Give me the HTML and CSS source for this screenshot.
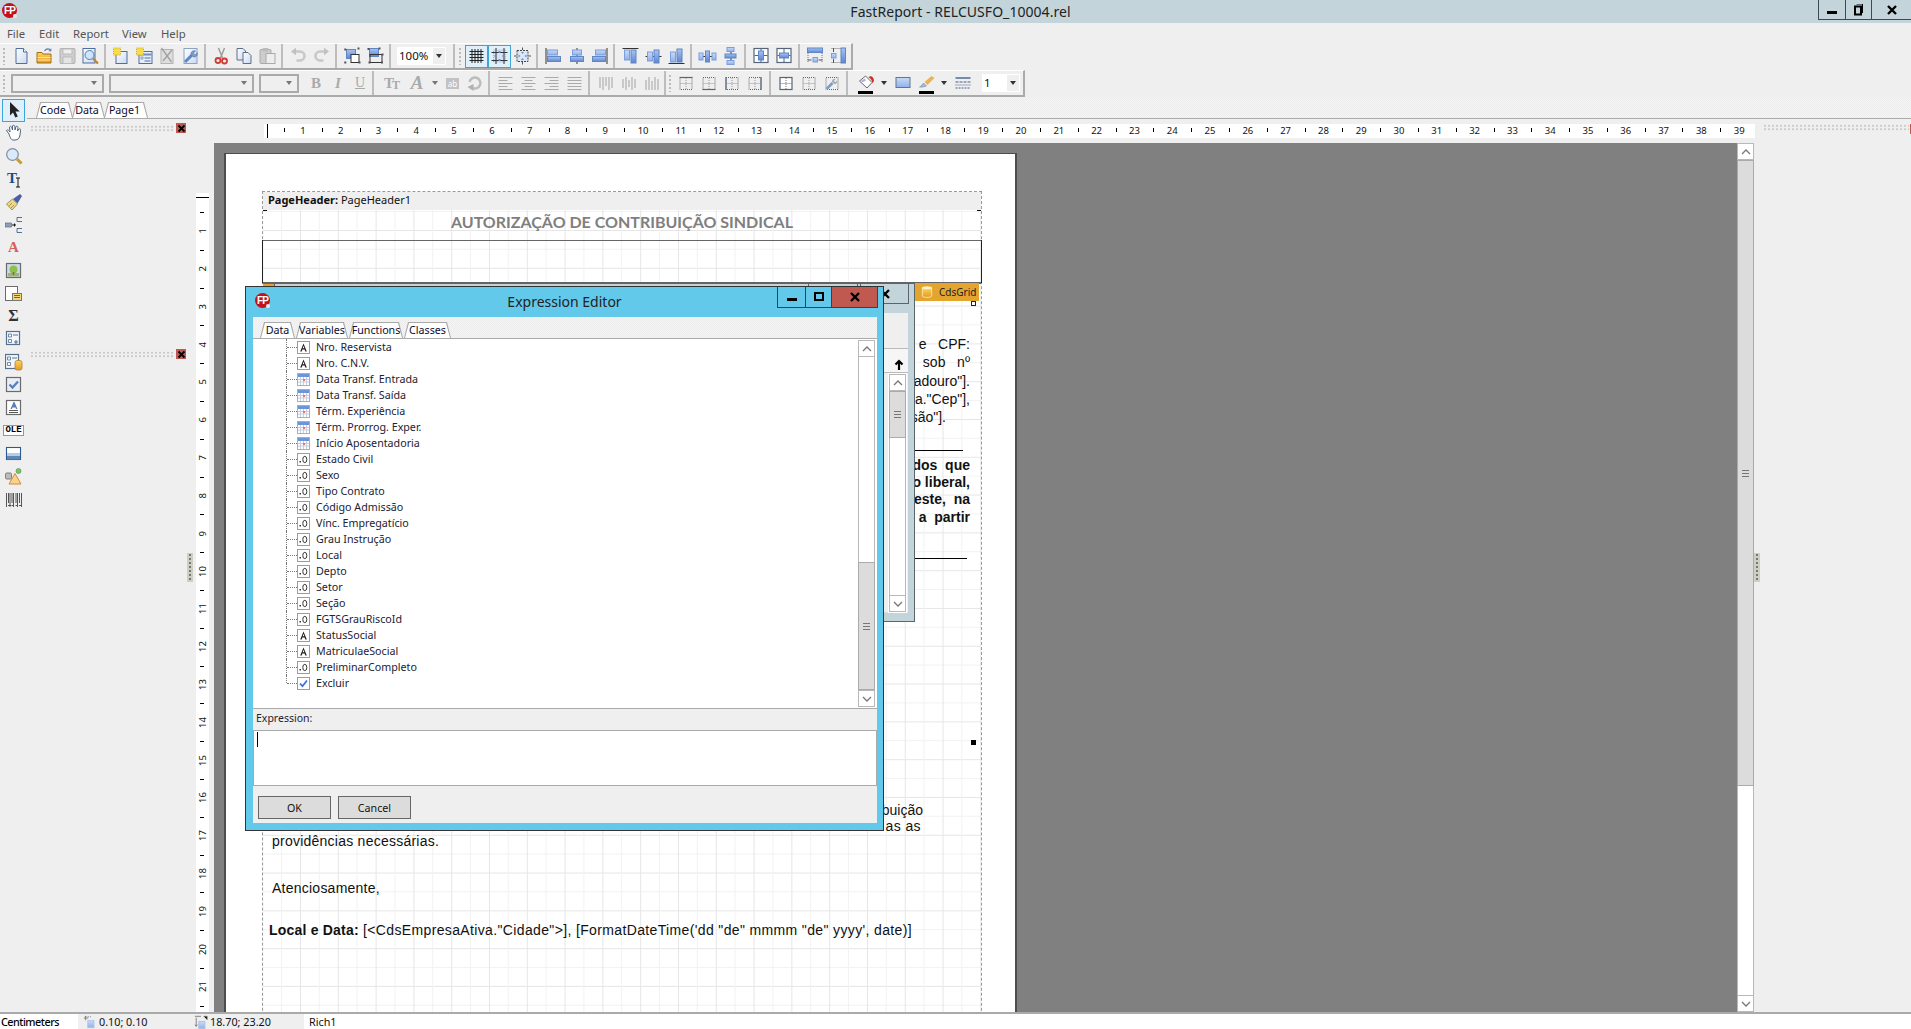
FILE: index.html
```html
<!DOCTYPE html>
<html lang="pt">
<head>
<meta charset="utf-8">
<title>FastReport - RELCUSFO_10004.rel</title>
<link rel="stylesheet" href="styles.css">
</head>
<body>
<svg class="defs" width="0" height="0" aria-hidden="true">
<defs>
<linearGradient id="bl" x1="0" y1="0" x2="0" y2="1"><stop offset="0" stop-color="#c9dcf7"/><stop offset="1" stop-color="#8fb0ea"/></linearGradient>
<linearGradient id="bd" x1="0" y1="0" x2="0" y2="1"><stop offset="0" stop-color="#a9c4f2"/><stop offset="1" stop-color="#5f86d2"/></linearGradient>
<linearGradient id="pg" x1="0" y1="0" x2="1" y2="1"><stop offset="0" stop-color="#fff"/><stop offset="1" stop-color="#c9d9f2"/></linearGradient>
<linearGradient id="or" x1="0" y1="0" x2="0" y2="1"><stop offset="0" stop-color="#fbd45f"/><stop offset="1" stop-color="#e69a22"/></linearGradient>

<symbol id="new" viewBox="0 0 18 18"><path d="M3.5 1.5h7.5l3.5 3.5v11.500H3.500z" fill="url(#pg)" stroke="#4f6f9f"/><path d="M11 1.500V5h3.500" fill="#fff" stroke="#4f6f9f"/></symbol>
<symbol id="open" viewBox="0 0 18 18"><path d="M1.500 5.500h5l1 1.500h8v9h-14z" fill="url(#or)" stroke="#a56c18"/><path d="M2 10.500h13M2 13h13" stroke="#fbe6a4"/><path d="M9 4c1.500-2 3.500-2.500 5.500-1.500" fill="none" stroke="#5a7ba8" stroke-width="1.200"/><path d="M15.800 1.200v3h-3z" fill="#5a7ba8"/></symbol>
<symbol id="save" viewBox="0 0 18 18"><rect x="1.500" y="1.500" width="15" height="15" rx="1" fill="#cfcfcf" stroke="#b0b0b0"/><rect x="4.500" y="2" width="9" height="5" fill="#eee" stroke="#bbb"/><rect x="4.500" y="10" width="9" height="6.500" fill="#e4e4e4" stroke="#bbb"/></symbol>
<symbol id="prev" viewBox="0 0 18 18"><rect x="1.500" y="1.500" width="12" height="14.500" fill="url(#pg)" stroke="#4f6f9f"/><circle cx="8" cy="8" r="4.500" fill="#cfe5fb" stroke="#5a7ba8"/><path d="M11.500 11.500l5 5" stroke="#c27f32" stroke-width="2.200"/></symbol>
<symbol id="npage" viewBox="0 0 18 18"><rect x="3.500" y="4.500" width="11" height="12" fill="url(#pg)" stroke="#4f6f9f"/><rect x="1" y="1" width="7" height="7" fill="#f7dc4a" stroke="#c9a93a" stroke-dasharray="1 1"/></symbol>
<symbol id="ndlg" viewBox="0 0 18 18"><rect x="3.500" y="4.500" width="13" height="12" fill="#e8effa" stroke="#4f6f9f"/><path d="M4 7.500h12" stroke="#6f8fc0" stroke-width="2"/><rect x="5.500" y="10" width="2" height="2" fill="#fff" stroke="#4f6f9f" stroke-width=".6"/><path d="M9 11h6M9 14h6" stroke="#4f6f9f"/><rect x="1" y="1" width="7" height="7" fill="#f7dc4a" stroke="#c9a93a" stroke-dasharray="1 1"/></symbol>
<symbol id="dpage" viewBox="0 0 18 18"><rect x="2.500" y="2.500" width="12" height="14" fill="#dedede" stroke="#b4b4b4"/><path d="M3 1l10 14M13.500 3l-9 11" stroke="#a0a0a0" stroke-width="1.300"/></symbol>
<symbol id="pset" viewBox="0 0 18 18"><rect x="2.500" y="1.500" width="13" height="15" fill="url(#pg)" stroke="#8ca2c4"/><path d="M3.500 15l7-7" stroke="#5f86c6" stroke-width="3"/><path d="M9.500 7.500c-.5-2.500 2-4.500 4.500-3.500l-2.200 2.200 1.700 1.700 2.200-2.200c.8 2.500-1.200 4.800-3.700 4.300z" fill="#7f9cc9" stroke="#4f6f9f" stroke-width=".6"/></symbol>
<symbol id="cut" viewBox="0 0 18 18"><path d="M12 1L8 11M6 1l4 10" stroke="#9a9a9a" stroke-width="1.400"/><circle cx="5.500" cy="13.500" r="2.500" fill="none" stroke="#cf3c36" stroke-width="1.800"/><circle cx="12" cy="14" r="2.500" fill="none" stroke="#cf3c36" stroke-width="1.800"/></symbol>
<symbol id="copy" viewBox="0 0 18 18"><path d="M1.500 1.500h6l2.500 2.500v9h-8.500z" fill="url(#pg)" stroke="#5f6f88"/><path d="M7.500 5.500h5l3 3v8h-8z" fill="url(#pg)" stroke="#5f6f88"/></symbol>
<symbol id="paste" viewBox="0 0 18 18"><rect x="1.500" y="2.500" width="11" height="14" rx="1" fill="#cdcdcd" stroke="#aaa"/><rect x="4" y="1" width="6" height="3.500" rx="1" fill="#bbb"/><rect x="7.500" y="6.500" width="9" height="10" fill="#ededed" stroke="#aaa"/></symbol>
<symbol id="undo" viewBox="0 0 18 18"><path d="M5 4.500h5.500a4.500 4.500 0 0 1 0 9H7" fill="none" stroke="#c8c8c8" stroke-width="2.600"/><path d="M6.500 .8v7.400L1.500 4.500z" fill="#c0c0c0"/></symbol>
<symbol id="redo" viewBox="0 0 18 18"><path d="M13 4.500H7.500a4.500 4.500 0 0 0 0 9H11" fill="none" stroke="#c8c8c8" stroke-width="2.600"/><path d="M11.500 .8v7.400l5-3.700z" fill="#c0c0c0"/></symbol>
<symbol id="grp" viewBox="0 0 18 18"><rect x="3" y="2.500" width="9" height="9" fill="url(#bd)" stroke="#5f86c6"/><rect x="7.500" y="7.500" width="8" height="8" fill="#fff" stroke="#333"/><path d="M.8 1.500h2v2h-2zM14 .5h2v2h-2zM.8 14.500h2v2h-2zM15 14.500h2v2h-2z" fill="#555"/></symbol>
<symbol id="ugrp" viewBox="0 0 18 18"><rect x="3" y="1.500" width="9" height="8" fill="url(#bd)" stroke="#5f86c6"/><rect x="3.500" y="7.500" width="12" height="8" fill="none" stroke="#333"/><path d="M1 1h2v2H1zM12 .5h2v2h-2zM15 6.500h2v2h-2zM2 14.500h2v2H2zM14.500 14.500h2v2h-2z" fill="#555"/></symbol>
<symbol id="grid" viewBox="0 0 18 18"><path d="M2 4.500h14M2 7.500h14M2 10.500h14M2 13.500h14M4.500 2v14M7.500 2v14M10.500 2v14M13.500 2v14" stroke="#222"/></symbol>
<symbol id="gali" viewBox="0 0 18 18"><rect x="3" y="3" width="12" height="12" fill="#d6e3f6" stroke="#9db4d8" stroke-dasharray="1 1"/><path d="M1 5.500h16M1 13.500h16M5.500 1v16M13.500 1v16" stroke="#333"/><path d="M8 4h2v2H8zM8 12h2v2H8zM4 8h2v2H4zM12 8h2v2h-2z" fill="#6f8fc0"/></symbol>
<symbol id="gfit" viewBox="0 0 18 18"><rect x="3.500" y="3.500" width="11" height="11" fill="#dbe6f7" stroke="#444" stroke-dasharray="2 1"/><path d="M9 .5v2.500M9 15v2.500M.5 9H3M15 9h2.500" stroke="#555"/><path d="M7.500 5h3L9 7zM7.500 13h3L9 11zM5 7.500v3L7 9zM13 7.500v3L11 9z" fill="#6f8fc0"/></symbol>

<symbol id="al" viewBox="0 0 18 18"><path d="M1.500 1v16" stroke="#333"/><rect x="3" y="3" width="10" height="5" fill="url(#bl)" stroke="#7d9ddc"/><rect x="3" y="9.500" width="13" height="5" fill="url(#bd)" stroke="#5f86c6"/></symbol>
<symbol id="ac" viewBox="0 0 18 18"><path d="M9.500 1v16" stroke="#333"/><rect x="5" y="3" width="9" height="5" fill="url(#bl)" stroke="#7d9ddc"/><rect x="3" y="9.500" width="13" height="5" fill="url(#bd)" stroke="#5f86c6"/></symbol>
<symbol id="ar" viewBox="0 0 18 18"><path d="M16.500 1v16" stroke="#333"/><rect x="5" y="3" width="10" height="5" fill="url(#bl)" stroke="#7d9ddc"/><rect x="2" y="9.500" width="13" height="5" fill="url(#bd)" stroke="#5f86c6"/></symbol>
<symbol id="at" viewBox="0 0 18 18"><path d="M1 1.500h16" stroke="#333"/><rect x="3" y="3" width="5" height="10" fill="url(#bl)" stroke="#7d9ddc"/><rect x="9.500" y="3" width="5" height="13" fill="url(#bd)" stroke="#5f86c6"/></symbol>
<symbol id="am" viewBox="0 0 18 18"><path d="M1 9.500h16" stroke="#333"/><rect x="3" y="5" width="5" height="9" fill="url(#bl)" stroke="#7d9ddc"/><rect x="9.500" y="3" width="5" height="13" fill="url(#bd)" stroke="#5f86c6"/></symbol>
<symbol id="ab2" viewBox="0 0 18 18"><path d="M1 16.500h16" stroke="#333"/><rect x="3" y="5" width="5" height="10" fill="url(#bl)" stroke="#7d9ddc"/><rect x="9.500" y="2" width="5" height="13" fill="url(#bd)" stroke="#5f86c6"/></symbol>
<symbol id="sh" viewBox="0 0 18 18"><path d="M1 9.500h16" stroke="#333"/><rect x=".5" y="6" width="4" height="7" fill="url(#bl)" stroke="#7d9ddc"/><rect x="7" y="4" width="4" height="11" fill="url(#bd)" stroke="#5f86c6"/><rect x="13.500" y="6" width="4" height="7" fill="url(#bl)" stroke="#7d9ddc"/></symbol>
<symbol id="sv" viewBox="0 0 18 18"><path d="M9.500 1v16" stroke="#333"/><rect x="5.500" y=".5" width="7" height="4" fill="url(#bl)" stroke="#7d9ddc"/><rect x="3.500" y="7" width="11" height="4" fill="url(#bd)" stroke="#5f86c6"/><rect x="5.500" y="13.500" width="7" height="4" fill="url(#bl)" stroke="#7d9ddc"/></symbol>
<symbol id="cw" viewBox="0 0 18 18"><rect x="1.500" y="1.500" width="14" height="14" fill="#fff" stroke="#55657a" stroke-width="1.200"/><path d="M2 8.500h13M8.500 2v13" stroke="#55657a"/><rect x="6" y="4" width="5" height="9" fill="url(#bd)" stroke="#5f86c6"/></symbol>
<symbol id="ch" viewBox="0 0 18 18"><rect x="1.500" y="1.500" width="14" height="14" fill="#fff" stroke="#55657a" stroke-width="1.200"/><path d="M2 8.500h13M8.500 2v13" stroke="#55657a"/><rect x="4" y="6" width="9" height="5" fill="url(#bd)" stroke="#5f86c6"/></symbol>
<symbol id="sw" viewBox="0 0 18 18"><rect x="1" y="1" width="15" height="4.500" fill="url(#bd)" stroke="#5f86c6"/><path d="M1.500 6v10M15.500 6v10" stroke="#777" stroke-dasharray="1 1"/><path d="M1 13h4M12 13h4" stroke="#555"/><rect x="6.500" y="10.500" width="4.500" height="4.500" fill="url(#bl)" stroke="#7d9ddc"/></symbol>
<symbol id="sz" viewBox="0 0 18 18"><rect x="11.500" y="1" width="4.500" height="15" fill="url(#bd)" stroke="#5f86c6"/><path d="M2 1.500h9M2 15.500h9" stroke="#777" stroke-dasharray="1 1"/><path d="M4 1v4M4 12v4" stroke="#555"/><rect x="2" y="6.500" width="4.500" height="4.500" fill="url(#bl)" stroke="#7d9ddc"/></symbol>

<symbol id="tleft" viewBox="0 0 18 18"><path d="M2 3.500h14M2 6.500h9M2 9.500h14M2 12.500h9M2 15.500h14" stroke="#aaa"/></symbol>
<symbol id="tcen" viewBox="0 0 18 18"><path d="M2 3.500h14M5 6.500h8M2 9.500h14M5 12.500h8M2 15.500h14" stroke="#aaa"/></symbol>
<symbol id="trig" viewBox="0 0 18 18"><path d="M2 3.500h14M7 6.500h9M2 9.500h14M7 12.500h9M2 15.500h14" stroke="#aaa"/></symbol>
<symbol id="tjus" viewBox="0 0 18 18"><path d="M2 3.500h14M2 6.500h14M2 9.500h14M2 12.500h14M2 15.500h14" stroke="#aaa"/></symbol>
<symbol id="vtop" viewBox="0 0 18 18"><path d="M3.500 3v11M6.500 3v13M9.500 3v9M12.500 3v13M15.500 3v11" stroke="#aaa" stroke-width="1.100"/></symbol>
<symbol id="vmid" viewBox="0 0 18 18"><path d="M3.500 5v9M6.500 3v13M9.500 6v7M12.500 3v13M15.500 5v9" stroke="#aaa" stroke-width="1.100"/></symbol>
<symbol id="vbot" viewBox="0 0 18 18"><path d="M3.500 6v10M6.500 3v13M9.500 7v9M12.500 3v13M15.500 5v11" stroke="#aaa" stroke-width="1.100"/></symbol>
<symbol id="ftop" viewBox="0 0 18 18"><rect x="2.500" y="3.500" width="12" height="12" fill="none" stroke="#666" stroke-dasharray="1 1"/><path d="M2 3.500h13" stroke="#55657a" stroke-width="1.200"/><path d="M8.500 4v11M3 9.500h11" stroke="#999" stroke-dasharray="1 1"/></symbol>
<symbol id="fbot" viewBox="0 0 18 18"><rect x="2.500" y="3.500" width="12" height="12" fill="none" stroke="#666" stroke-dasharray="1 1"/><path d="M2 15.500h13" stroke="#55657a" stroke-width="1.200"/><path d="M8.500 4v11M3 9.500h11" stroke="#999" stroke-dasharray="1 1"/></symbol>
<symbol id="flef" viewBox="0 0 18 18"><rect x="2.500" y="3.500" width="12" height="12" fill="none" stroke="#666" stroke-dasharray="1 1"/><path d="M2.500 3v13" stroke="#55657a" stroke-width="1.200"/><path d="M8.500 4v11M3 9.500h11" stroke="#999" stroke-dasharray="1 1"/></symbol>
<symbol id="frig" viewBox="0 0 18 18"><rect x="2.500" y="3.500" width="12" height="12" fill="none" stroke="#666" stroke-dasharray="1 1"/><path d="M14.500 3v13" stroke="#55657a" stroke-width="1.200"/><path d="M8.500 4v11M3 9.500h11" stroke="#999" stroke-dasharray="1 1"/></symbol>
<symbol id="fall" viewBox="0 0 18 18"><rect x="2.500" y="3.500" width="12" height="12" fill="#fff" stroke="#55657a" stroke-width="1.200"/><path d="M8.500 4v11M3 9.500h11" stroke="#777" stroke-dasharray="1 1"/></symbol>
<symbol id="fnon" viewBox="0 0 18 18"><rect x="2.500" y="3.500" width="12" height="12" fill="none" stroke="#666" stroke-dasharray="1 1"/><path d="M8.500 4v11M3 9.500h11" stroke="#999" stroke-dasharray="1 1"/></symbol>
<symbol id="fset" viewBox="0 0 18 18"><rect x="2.500" y="3.500" width="12" height="12" fill="none" stroke="#666" stroke-dasharray="1 1"/><path d="M3 15l6-6" stroke="#7f9cc9" stroke-width="2.600"/><path d="M8.500 8c-.5-2 1.500-3.800 3.800-3l-1.800 1.800 1.400 1.400 1.800-1.800c.7 2.200-1.100 4.100-3.200 3.600z" fill="#a7b0bd"/></symbol>
<symbol id="rot" viewBox="0 0 18 18"><path d="M4 8a5.500 5.500 0 1 1 3 6" fill="none" stroke="#bcbcbc" stroke-width="2.400"/><path d="M2 13l6-3v7z" fill="#b0b0b0"/></symbol>
<symbol id="fill" viewBox="0 0 18 18"><path d="M2 7l6-5 6.500 6.500-5 5.500z" fill="#fff" stroke="#667"/><path d="M4 7.500l4-2" stroke="#a7b7d0" stroke-width="2"/><path d="M11 3c3-2 5 0 5.500 3.500l-1.300 3-1.500-4z" fill="#cf2e1f"/></symbol>
<symbol id="bcol" viewBox="0 0 18 18"><rect x="1.500" y="3.500" width="14" height="10" fill="url(#bl)" stroke="#64748c"/></symbol>
<symbol id="pen" viewBox="0 0 18 18"><path d="M1 13c2-1 3-3 4-4l3 3c-2 .5-4 1.500-7 1z" fill="#a7b7d8" stroke="#7a8aa8" stroke-width=".6"/><path d="M6 8l7-6 3 2-7 7z" fill="#e9b451"/></symbol>
<symbol id="lst" viewBox="0 0 18 18"><path d="M1 4h15" stroke="#44618f" stroke-width="1.400"/><path d="M1 8h15" stroke="#44618f" stroke-dasharray="3 1"/><path d="M1 11h15" stroke="#44618f" stroke-dasharray="1 1"/><path d="M1 14h15" stroke="#44618f" stroke-dasharray="2 1"/></symbol>

<symbol id="ptr" viewBox="0 0 18 18"><path d="M5 1v13.500l3-3 2.300 5 2.500-1.100-2.300-4.900h4.200z" fill="#222"/></symbol>
<symbol id="hand" viewBox="0 0 18 18"><path d="M4 10L1.500 6.500c1-1.500 2.500 0 3.500 1.500L4.500 3c1-1.300 2-.5 2.200.5L7.500 6 7.500 1.800c1-1 2-.5 2.300.5L10 6l1-3.500c1.200-.7 2 0 2 1L12.500 7l1.500-2c1-.5 1.800 0 1.500 1.200L15 11c-.5 3-2 5-5 5H8c-2 0-3-3-4-6z" fill="#fff" stroke="#4f6580"/></symbol>
<symbol id="mag" viewBox="0 0 18 18"><circle cx="7.500" cy="7.500" r="5.800" fill="#dbeafa" stroke="#7f8ea0" stroke-width="1.200"/><path d="M12 12l4.500 4.500" stroke="#c69a35" stroke-width="3"/></symbol>
<symbol id="ibeam" viewBox="0 0 18 18"><path d="M11 8h4M11 17h4M13 8v9" stroke="#111"/></symbol>
<symbol id="brush" viewBox="0 0 18 18"><path d="M1.500 11l6-5 5 5-5.500 6z" fill="#eed98a" stroke="#8d7e46" stroke-width=".8"/><path d="M4 13l3-3M6 15l3-3" stroke="#a9954e"/><path d="M8 6l7-5 2 2-4.500 7.500z" fill="#4a5fa5"/></symbol>
<symbol id="tree" viewBox="0 0 18 18"><rect x=".5" y="7" width="6" height="4" fill="#8f9fb5" stroke="#56708f" stroke-width=".7"/><path d="M7 9h4M9.500 7.500v3" stroke="#111"/><path d="M17 1.500h-5v4h5M17 12.500h-5v4h5" fill="none" stroke="#56708f"/></symbol>
<symbol id="pic" viewBox="0 0 18 18"><rect x="1.500" y="1.500" width="14" height="14" fill="#c9dbef" stroke="#6b6b6b" stroke-width="1.200"/><rect x="3" y="11" width="11" height="3.500" fill="#9fb56e"/><circle cx="8.500" cy="7.500" r="4" fill="#8ec04e"/><rect x="7.700" y="10" width="1.600" height="3" fill="#8c6a3a"/></symbol>
<symbol id="sub" viewBox="0 0 18 18"><rect x=".5" y="1.500" width="12" height="14" fill="#fff" stroke="#6b6b6b"/><rect x="7.500" y="8.500" width="9" height="7" fill="#f5d675" stroke="#777"/><path d="M9 10.500h6M9 12.500h6" stroke="#77683a"/></symbol>
<symbol id="dbx" viewBox="0 0 18 18"><rect x="1.500" y="1.500" width="13" height="13" fill="#f4f8fd" stroke="#56708f" stroke-width="1.200"/><path d="M3.500 4h3v3h-3zM3.500 9.500h3v3h-3z" fill="none" stroke="#56708f" stroke-width=".8"/><path d="M8 5h5" stroke="#56708f"/><path d="M9 12h4M11 10v4" stroke="#56708f" stroke-width="1.100"/></symbol>
<symbol id="dbm" viewBox="0 0 18 18"><rect x=".5" y="1.500" width="13" height="14" fill="#f4f8fd" stroke="#56708f" stroke-width="1.200"/><path d="M2.500 4h3v3h-3zM2.500 9.500h3v3h-3z" fill="none" stroke="#56708f" stroke-width=".8"/><path d="M7 5h5" stroke="#56708f"/><rect x="10" y="7.500" width="7" height="9.500" rx="2" fill="url(#or)" stroke="#b37a1e" stroke-width=".7"/></symbol>
<symbol id="chk" viewBox="0 0 18 18"><rect x="1.500" y="1.500" width="14" height="14" fill="#e9eef6" stroke="#6b6b6b" stroke-width="1.200"/><path d="M4.500 8.500l3 3 5.500-6" fill="none" stroke="#5b7fb8" stroke-width="2.300"/></symbol>
<symbol id="mem" viewBox="0 0 18 18"><rect x="1.500" y="1.500" width="14" height="14" fill="#fff" stroke="#6b6b6b" stroke-width="1.200"/><path d="M8.500 3l-3 7h1.500l.6-1.500h2.800L11 10h1.500l-3-7z" fill="#5b7fb8"/><path d="M4 11.500h9M4 13.500h9" stroke="#555"/></symbol>
<symbol id="bnd" viewBox="0 0 18 18"><rect x="1.500" y="2.500" width="14" height="12" fill="#fff" stroke="#2c5a92" stroke-width="1.100"/><rect x="2" y="8" width="13" height="3" fill="#b9cbe2"/><rect x="2" y="11" width="13" height="3.500" fill="#5f86b8"/></symbol>
<symbol id="shp" viewBox="0 0 18 18"><rect x=".5" y="5" width="6" height="6" rx="1.200" fill="#bcbcbc" stroke="#7e7e7e"/><circle cx="13.500" cy="3" r="2.500" fill="#7cc26b" stroke="#5d9c50" stroke-width=".7"/><path d="M10 5.500l6 10.500H4z" fill="#f6d48c" stroke="#d7883c"/></symbol>
<symbol id="brc" viewBox="0 0 18 18"><path d="M1.500 2v14M3.500 2v10M5 2v14M7 2v10M8.500 2v14M11 2v10M12.500 2v14M14.500 2v10M16.500 2v14" stroke="#555"/><path d="M3 14.500h3M6.500 14.500h2M10.500 14.500h2M14 14.500h2" stroke="#555"/></symbol>
<symbol id="cyl" viewBox="0 0 18 18"><path d="M3 3.500v10.500c0 2.500 12 2.500 12 0V3.500z" fill="url(#or)" stroke="#fff3c0"/><ellipse cx="9" cy="3.500" rx="6" ry="2" fill="#fff3c4"/></symbol>

<symbol id="chU" viewBox="0 0 10 10"><path d="M1 7l4-4 4 4" fill="none" stroke="#777" stroke-width="1.300"/></symbol>
<symbol id="chD" viewBox="0 0 10 10"><path d="M1 3l4 4 4-4" fill="none" stroke="#777" stroke-width="1.300"/></symbol>
<symbol id="wmin" viewBox="0 0 12 12"><rect x="1" y="7" width="10" height="3" fill="#000"/></symbol>
<symbol id="wmax" viewBox="0 0 12 12"><rect x="2" y="2" width="8" height="7" fill="none" stroke="#000" stroke-width="2"/></symbol>
<symbol id="wres" viewBox="0 0 12 12"><path d="M3.500 0h6v9" fill="none" stroke="#000"/><rect x="2" y="2.500" width="6" height="8" fill="none" stroke="#000" stroke-width="2"/></symbol>
<symbol id="wcls" viewBox="0 0 12 12"><path d="M2 2l8 8M10 2l-8 8" stroke="#000" stroke-width="2.400"/></symbol>

<symbol id="tA" viewBox="0 0 13 13"><rect x=".5" y=".5" width="12" height="12" fill="#fff" stroke="#8a9fbe"/><path d="M6.500 2.500l-3.300 8h1.500l.7-2h2.200l.7 2h1.500zM5.700 7.300l.8-2.500.8 2.500z" fill="#222"/></symbol>
<symbol id="tD" viewBox="0 0 13 13"><rect x=".5" y=".5" width="12" height="12" fill="#fff" stroke="#9fb0cc"/><rect x="1" y="1" width="11" height="3" fill="#6f93d8"/><path d="M1 6.500h11M1 9h11M3.500 4v8M6.500 4v8M9.500 4v8" stroke="#c4cedf"/><rect x="6" y="6" width="2" height="2" fill="#e5716a"/></symbol>
<symbol id="tN" viewBox="0 0 13 13"><rect x=".5" y=".5" width="12" height="12" fill="#fff" stroke="#8a9fbe"/><rect x="2.500" y="8" width="1.500" height="1.500" fill="#333"/><ellipse cx="7.800" cy="6.500" rx="2" ry="3.200" fill="none" stroke="#333"/></symbol>
<symbol id="tC" viewBox="0 0 13 13"><rect x=".5" y=".5" width="12" height="12" fill="#fff" stroke="#8a9fbe"/><path d="M3 6.500l2.500 2.700L10 3.500" fill="none" stroke="#3f6fdc" stroke-width="1.800"/></symbol>
<symbol id="sX" viewBox="0 0 16 16"><path d="M2 2h8" stroke="#777" stroke-dasharray="1 1"/><rect x="5.500" y="6.500" width="7" height="8" fill="url(#bl)" stroke="#a8c0e8"/><path d="M3 1v5M1 3.500h5" stroke="#777"/></symbol>
<symbol id="sY" viewBox="0 0 16 16"><path d="M11 1.500h4v4M1 1.500h7" stroke="#777"/><rect x="5.500" y="7.500" width="7" height="8" fill="url(#bl)" stroke="#a8c0e8"/><path d="M2.500 3v10M1 11l1.500 2L4 11" fill="none" stroke="#777"/></symbol>
</defs>
</svg>

<div class="app">
  <header class="titlebar">
    <span class="fp"><span>FP</span></span>
    <div class="apptitle">FastReport - RELCUSFO_10004.rel</div>
    <div class="winbtns">
      <span class="wb wb-a"><svg class="wg"><use href="#wmin"/></svg></span>
      <span class="wb wb-b"><svg class="wg"><use href="#wres"/></svg></span>
      <span class="wb wb-c"><svg class="wg"><use href="#wcls"/></svg></span>
    </div>
  </header>

  <nav class="menubar"><span>File</span><span>Edit</span><span>Report</span><span>View</span><span>Help</span></nav>

  <div class="tbrow tbrow1">
    <div class="tb">
      <i class="grip"></i>
      <svg class="ic"><use href="#new"/></svg><svg class="ic"><use href="#open"/></svg><svg class="ic"><use href="#save"/></svg><svg class="ic"><use href="#prev"/></svg><i class="sep"></i>
      <svg class="ic"><use href="#npage"/></svg><svg class="ic"><use href="#ndlg"/></svg><svg class="ic"><use href="#dpage"/></svg><svg class="ic"><use href="#pset"/></svg><i class="sep"></i>
      <svg class="ic"><use href="#cut"/></svg><svg class="ic"><use href="#copy"/></svg><svg class="ic"><use href="#paste"/></svg><i class="sep"></i>
      <svg class="ic"><use href="#undo"/></svg><svg class="ic"><use href="#redo"/></svg><i class="sep"></i>
      <svg class="ic"><use href="#grp"/></svg><svg class="ic"><use href="#ugrp"/></svg><i class="sep"></i>
      <span class="zoom"><b>100%</b><em></em></span><i class="sep sep-z"></i>
    </div>
    <div class="tb tb-b">
      <i class="grip"></i>
      <span class="ic on"><svg class="ic"><use href="#grid"/></svg></span><span class="ic on"><svg class="ic"><use href="#gali"/></svg></span><svg class="ic"><use href="#gfit"/></svg><i class="sep"></i>
      <svg class="ic"><use href="#al"/></svg><svg class="ic"><use href="#ac"/></svg><svg class="ic"><use href="#ar"/></svg><i class="sep"></i>
      <svg class="ic"><use href="#at"/></svg><svg class="ic"><use href="#am"/></svg><svg class="ic"><use href="#ab2"/></svg><i class="sep"></i>
      <svg class="ic"><use href="#sh"/></svg><svg class="ic"><use href="#sv"/></svg><i class="sep"></i>
      <svg class="ic"><use href="#cw"/></svg><svg class="ic"><use href="#ch"/></svg><i class="sep"></i>
      <svg class="ic"><use href="#sw"/></svg><svg class="ic"><use href="#sz"/></svg>
    </div>
  </div>

  <div class="tbrow tbrow2">
    <div class="tb">
      <i class="grip"></i>
      <span class="cb cb1"><em></em></span><span class="cb cb2"><em></em></span><span class="cb cb3"><em></em></span>
      <span class="tg tg-b">B</span><span class="tg tg-i">I</span><span class="tg tg-u">U</span><i class="sep sep-f"></i>
      <span class="tg tg-t">T<small>T</small></span><span class="tg tg-a">A</span><em class="dd dd-g"></em><span class="abx">ab</span><svg class="ic"><use href="#rot"/></svg><i class="sep"></i>
      <svg class="ic"><use href="#tleft"/></svg><svg class="ic"><use href="#tcen"/></svg><svg class="ic"><use href="#trig"/></svg><svg class="ic"><use href="#tjus"/></svg><i class="sep"></i>
      <svg class="ic"><use href="#vtop"/></svg><svg class="ic"><use href="#vmid"/></svg><svg class="ic"><use href="#vbot"/></svg><i class="sep sep-e"></i>
    </div>
    <div class="tb tb-c">
      <i class="grip"></i>
      <svg class="ic"><use href="#ftop"/></svg><svg class="ic"><use href="#fbot"/></svg><svg class="ic"><use href="#flef"/></svg><svg class="ic"><use href="#frig"/></svg><i class="sep"></i>
      <svg class="ic"><use href="#fall"/></svg><svg class="ic"><use href="#fnon"/></svg><svg class="ic"><use href="#fset"/></svg><i class="sep"></i>
      <span class="ic colr"><svg class="ic"><use href="#fill"/></svg><u></u></span><em class="dd"></em><svg class="ic"><use href="#bcol"/></svg><span class="ic colr colr-p"><svg class="ic"><use href="#pen"/></svg><u></u></span><em class="dd"></em><svg class="ic"><use href="#lst"/></svg>
      <span class="zoom zoom-w"><b>1</b><em></em></span>
    </div>
  </div>

  <div class="tabstrip">
    <span class="tab">Code</span><span class="tab">Data</span><span class="tab">Page1</span>
  </div>

  <main class="work">
    <aside class="tools">
      <span class="tool tool-on"><svg class="ic"><use href="#ptr"/></svg></span>
      <span class="tool"><svg class="ic"><use href="#hand"/></svg></span>
      <span class="tool"><svg class="ic"><use href="#mag"/></svg></span>
      <span class="tool toolT"><b>T</b><svg class="ic"><use href="#ibeam"/></svg></span>
      <span class="tool"><svg class="ic"><use href="#brush"/></svg></span>
      <span class="tool"><svg class="ic"><use href="#tree"/></svg></span>
      <span class="tool toolA">A</span>
      <span class="tool"><svg class="ic"><use href="#pic"/></svg></span>
      <span class="tool"><svg class="ic"><use href="#sub"/></svg></span>
      <span class="tool toolS">Σ</span>
      <span class="tool"><svg class="ic"><use href="#dbx"/></svg></span>
      <span class="tool"><svg class="ic"><use href="#dbm"/></svg></span>
      <span class="tool"><svg class="ic"><use href="#chk"/></svg></span>
      <span class="tool"><svg class="ic"><use href="#mem"/></svg></span>
      <span class="tool"><span class="ole">OLE</span></span>
      <span class="tool"><svg class="ic"><use href="#bnd"/></svg></span>
      <span class="tool"><svg class="ic"><use href="#shp"/></svg></span>
      <span class="tool"><svg class="ic"><use href="#brc"/></svg></span>
    </aside>

    <div class="dockL">
      <div class="dockbar"><i class="dots"></i><i class="redx"><svg class="wg"><use href="#wcls"/></svg></i></div>
      <div class="dockbar dockbar2"><i class="dots"></i><i class="redx"><svg class="wg"><use href="#wcls"/></svg></i></div>
      <i class="splitter"></i>
    </div>

    <div class="center">
      <div class="hruler">
        <span class="hr0"></span>
        <span>1</span><span>2</span><span>3</span><span>4</span><span>5</span><span>6</span><span>7</span><span>8</span><span>9</span><span>10</span><span>11</span><span>12</span><span>13</span><span>14</span><span>15</span><span>16</span><span>17</span><span>18</span><span>19</span><span>20</span><span>21</span><span>22</span><span>23</span><span>24</span><span>25</span><span>26</span><span>27</span><span>28</span><span>29</span><span>30</span><span>31</span><span>32</span><span>33</span><span>34</span><span>35</span><span>36</span><span>37</span><span>38</span><span>39</span>
      </div>
      <div class="stage">
        <div class="vruler">
          <span class="vr0"></span>
          <span><b>1</b></span><span><b>2</b></span><span><b>3</b></span><span><b>4</b></span><span><b>5</b></span><span><b>6</b></span><span><b>7</b></span><span><b>8</b></span><span><b>9</b></span><span><b>10</b></span><span><b>11</b></span><span><b>12</b></span><span><b>13</b></span><span><b>14</b></span><span><b>15</b></span><span><b>16</b></span><span><b>17</b></span><span><b>18</b></span><span><b>19</b></span><span><b>20</b></span><span><b>21</b></span><span></span>
        </div>
        <div class="canvas">
          <div class="page">
            <div class="band">
              <div class="bandhead"><b>PageHeader:</b> PageHeader1</div>
              <div class="gridarea">
                <div class="rtitle">AUTORIZAÇÃO DE CONTRIBUIÇÃO SINDICAL</div>
                <i class="hl hl-a"></i><i class="vl vl-l"></i><i class="vl vl-r"></i><i class="hl hl-b"></i>
                <i class="tick tick-a"></i><i class="tick tick-b"></i>
                <div class="orange"></div>
                <div class="cds"><svg class="cy"><use href="#cyl"/></svg>CdsGrid</div>
                <i class="sizer"></i>

                <div class="frag f1">e&nbsp;&nbsp;&nbsp;CPF:</div>
                <div class="frag f2">sob&nbsp;&nbsp;&nbsp;nº</div>
                <div class="frag f3">adouro"].</div>
                <div class="frag f4">a."Cep"],</div>
                <div class="frag f5">são"].</div>
                <i class="rule r1"></i>
                <div class="frag fb f6">dos&nbsp;&nbsp;que</div>
                <div class="frag fb f7">o liberal,</div>
                <div class="frag fb f8">este,&nbsp;&nbsp;na</div>
                <div class="frag fb f9">a&nbsp;&nbsp;partir</div>
                <i class="rule r2"></i>
                <i class="hsq"></i>
                <div class="frag f10">buição</div>
                <div class="frag f11">as as</div>
                <div class="para p1">providências necessárias.</div>
                <div class="para p2">Atenciosamente,</div>
                <div class="para p3"><b>Local e Data:</b> [&lt;CdsEmpresaAtiva."Cidade"&gt;], [FormatDateTime('dd "de" mmmm "de" yyyy', date)]</div>
              </div>
            </div>
          </div>
        </div>
        <div class="sb sb-main">
          <span class="sbb"><svg class="chv"><use href="#chU"/></svg></span>
          <span class="thumb th-main"><i class="g3"></i></span>
          <span class="track"></span>
          <span class="sbb"><svg class="chv"><use href="#chD"/></svg></span>
        </div>
      </div>
    </div>

    <div class="dockR"><i class="dots"></i><i class="redx redx-cut"></i><i class="splitter splitterR"></i></div>
  </main>

  <footer class="statusbar">
    <span class="st st1">Centimeters</span>
    <span class="st st2"><svg class="si"><use href="#sX"/></svg>0.10; 0.10</span>
    <span class="st st3"><svg class="si"><use href="#sY"/></svg>18.70; 23.20</span>
    <span class="st st4">Rich1</span>
  </footer>
</div>

<section class="backdlg">
  <div class="bt">
    <i class="bsep bsep1"></i><i class="bsep bsep2"></i>
    <span class="bbtn"><svg class="wg"><use href="#wcls"/></svg></span>
  </div>
  <div class="bpanel">
    <div class="bhead"><svg class="upa" viewBox="0 0 10 12"><path d="M5 11V2.500M1.500 5.500L5 2l3.500 3.500" fill="none" stroke="#000" stroke-width="2.200"/></svg></div>
    <div class="sb sb-back">
      <span class="sbb"><svg class="chv"><use href="#chU"/></svg></span>
      <span class="thumb th-back"><i class="g3"></i></span>
      <span class="track"></span>
      <span class="sbb"><svg class="chv"><use href="#chD"/></svg></span>
    </div>
  </div>
</section>

<section class="dlg">
  <div class="dtitle">
    <span class="fp fp-d"><span>FP</span></span>
    <div class="dcap">Expression Editor</div>
    <div class="dbtns">
      <span class="db db-a"><svg class="wg"><use href="#wmin"/></svg></span>
      <span class="db db-b"><svg class="wg"><use href="#wmax"/></svg></span>
      <span class="db db-c"><svg class="wg"><use href="#wcls"/></svg></span>
    </div>
  </div>
  <div class="dbody">
    <div class="dtabs"><span class="tab">Data</span><span class="tab">Variables</span><span class="tab">Functions</span><span class="tab">Classes</span></div>
    <div class="treewrap">
      <ul class="tree">
        <li><svg class="ti"><use href="#tA"/></svg>Nro. Reservista</li>
        <li><svg class="ti"><use href="#tA"/></svg>Nro. C.N.V.</li>
        <li><svg class="ti"><use href="#tD"/></svg>Data Transf. Entrada</li>
        <li><svg class="ti"><use href="#tD"/></svg>Data Transf. Saída</li>
        <li><svg class="ti"><use href="#tD"/></svg>Térm. Experiência</li>
        <li><svg class="ti"><use href="#tD"/></svg>Térm. Prorrog. Exper.</li>
        <li><svg class="ti"><use href="#tD"/></svg>Início Aposentadoria</li>
        <li><svg class="ti"><use href="#tN"/></svg>Estado Civil</li>
        <li><svg class="ti"><use href="#tN"/></svg>Sexo</li>
        <li><svg class="ti"><use href="#tN"/></svg>Tipo Contrato</li>
        <li><svg class="ti"><use href="#tN"/></svg>Código Admissão</li>
        <li><svg class="ti"><use href="#tN"/></svg>Vínc. Empregatício</li>
        <li><svg class="ti"><use href="#tN"/></svg>Grau Instrução</li>
        <li><svg class="ti"><use href="#tN"/></svg>Local</li>
        <li><svg class="ti"><use href="#tN"/></svg>Depto</li>
        <li><svg class="ti"><use href="#tN"/></svg>Setor</li>
        <li><svg class="ti"><use href="#tN"/></svg>Seção</li>
        <li><svg class="ti"><use href="#tN"/></svg>FGTSGrauRiscoId</li>
        <li><svg class="ti"><use href="#tA"/></svg>StatusSocial</li>
        <li><svg class="ti"><use href="#tA"/></svg>MatriculaeSocial</li>
        <li><svg class="ti"><use href="#tN"/></svg>PreliminarCompleto</li>
        <li><svg class="ti"><use href="#tC"/></svg>Excluir</li>
      </ul>
      <div class="sb sb-tree">
        <span class="sbb"><svg class="chv"><use href="#chU"/></svg></span>
        <span class="track"></span>
        <span class="thumb th-tree"><i class="g3"></i></span>
        <span class="sbb"><svg class="chv"><use href="#chD"/></svg></span>
      </div>
    </div>
    <div class="exlabel">Expression:</div>
    <div class="memo"><i class="caret"></i></div>
    <div class="dfoot"><button class="btn">OK</button><button class="btn">Cancel</button></div>
  </div>
</section>
</body>
</html>
```

FILE: styles.css
```css
* { box-sizing: border-box; }
html { height: 1029px; overflow: hidden; }
html, body { margin: 0; padding: 0; }
body { width: 1911px; height: 1029px; overflow: hidden; position: relative; background: #efefef; font: 11px "Noto Sans", Tahoma, sans-serif; color: #111; }
i, em, u { font-style: normal; text-decoration: none; display: block; }
.defs { position: absolute; }
.app { display: flex; flex-direction: column; height: 1029px; }

/* title bar */
.titlebar { height: 23px; background: #c3d5db; position: relative; display: flex; align-items: center; justify-content: center; flex: none; }
.apptitle { font-size: 14px; letter-spacing: .05px; color: #222; margin-right: -10px; }
.fp { position: absolute; left: 2px; top: 3px; width: 15px; height: 15px; border-radius: 50%; background: #c40f1c; color: #fff; display: flex; align-items: center; justify-content: center; font: bold 10px "Liberation Sans", sans-serif; letter-spacing: -.8px; }
.fp::after { content: ""; position: absolute; right: 0; bottom: 0; width: 4px; height: 4px; background: #e8e8e8; border-radius: 50%; }
.winbtns { position: absolute; right: 0; top: 0; display: flex; height: 20px; border-bottom: 1px solid #3c4a52; border-left: 1px solid #3c4a52; }
.wb { height: 19px; display: flex; align-items: center; justify-content: center; border-right: 1px solid #3c4a52; }
.wb-a { width: 27px; } .wb-b { width: 26px; } .wb-c { width: 39px; border-right: none; }
.wg { width: 12px; height: 12px; display: block; }

/* menu */
.menubar { height: 20px; flex: none; display: flex; align-items: center; font-size: 11.300px; color: #555; padding: 0 0 0 7px; }
.menubar span:nth-child(1) { width: 32px; }
.menubar span:nth-child(2) { width: 34px; }
.menubar span:nth-child(3) { width: 49px; }
.menubar span:nth-child(4) { width: 39px; }

/* toolbars */
.tbrow { display: flex; flex: none; height: 27px; }
.tb { display: flex; align-items: center; padding-left: 10px; position: relative; border-top: 1px solid #fff; border-bottom: 2px solid #aaa; height: 100%; }
.tb > .grip { position: absolute; left: 2px; top: 3px; bottom: 3px; width: 4px; background: radial-gradient(circle, #bbb 1px, transparent 1.200px) 0 0 / 4px 4px; }
.tb-b { padding: 0 1px 0 10px; border-right: 2px solid #aaa; }
.tb-b > .grip { left: 3px; }
.tb-c { padding: 0 3px 0 9px; border-right: 2px solid #aaa; }
.tb-c > .grip { left: 2px; }
.ic { width: 23px; height: 18px; flex: none; display: block; }
span.ic { height: 23px; display: flex; align-items: center; }
span.on { background: #dff0fb; border: 1px solid #3ba6dc; }
span.on svg { width: 21px; }
.sep { width: 2px; height: 24px; background: #bdbdbd; margin: 0 4px 0 2px; flex: none; }
.sep-z { margin: 0 0 0 7px; }
.sep-f { margin: 0 6px 0 1px; }
.sep-e { margin: 0 0 0 1px; }
.zoom { width: 49px; height: 18px; background: #fff; border: 1px solid #fff; display: flex; align-items: stretch; margin-left: 2px; font-size: 11.500px; flex: none; }
.zoom b { flex: 1; font-weight: 400; padding: 0 0 0 1px; line-height: 16px; color: #111; }
.zoom em { width: 12px; background: #efefef; position: relative; }
.zoom em::after, .cb em::after, .dd::after { content: ""; position: absolute; left: 50%; top: 50%; margin: -2px 0 0 -3.500px; border: 3.500px solid transparent; border-top: 4px solid #333; border-bottom: none; }
.zoom-w { width: 38px; margin-left: 7px; }
.cb { height: 19px; border: 2px solid #aaa; display: flex; justify-content: flex-end; flex: none; background: #efefef; margin-right: 5px; }
.cb em { width: 16px; position: relative; }
.cb em::after { border-top-color: #777; }
.cb1 { width: 93px; margin-left: 1px; }
.cb2 { width: 145px; }
.cb3 { width: 40px; margin-right: 6px; }
.tg { width: 22px; height: 20px; flex: none; display: flex; align-items: center; justify-content: center; font: bold 15px "Liberation Serif", serif; color: #aaa; }
.tg-i { font-style: italic; }
.tg-u { text-decoration: underline; font: 14px "Liberation Serif", serif; }
.tg-t { width: 24px; font-size: 15px; }
.tg-t small { font-size: 12px; margin: 4px 0 0 -2px; }
.tg-a { font-style: italic; font-size: 19px; width: 26px; }
.dd { width: 10px; height: 12px; position: relative; flex: none; }
.tb-c .dd { width: 12px; margin-right: 1.500px; }
.dd-g::after { border-top-color: #777; }
.abx { width: 13px; height: 11px; background: #c2c2c2; color: #fff; font: 8px "Noto Sans", sans-serif; line-height: 11px; text-align: center; margin: 0 4px 0 6px; flex: none; }
.colr { position: relative; margin-left: 3px; }
.colr u { position: absolute; left: 3px; bottom: 1px; width: 15px; height: 3px; background: #000; }
.colr-p { margin-left: 1px; }

/* tab strips */
.tabstrip { height: 22px; flex: none; margin-left: 27px; padding: 5px 0 0 9px; display: flex; border-bottom: 1px solid #aaa; background: repeating-conic-gradient(#f5f5f5 0 25%, #ececec 0 50%) 0 0 / 2px 2px; }
.tab { position: relative; height: 16px; background: #aaa; clip-path: polygon(0 100%, 4px 0, calc(100% - 4px) 0, 100% 100%); display: block; padding: 0; text-align: center; line-height: 17px; color: #0c0c30; white-space: nowrap; font-size: 10.700px; z-index: 0; }
.tab::before { content: ""; position: absolute; inset: 1px 1px 0 1px; background: #fff; clip-path: polygon(0 100%, 4px 0, calc(100% - 4px) 0, 100% 100%); z-index: -1; }
.tabstrip .tab { padding-right: 3px; }
.tabstrip .tab:nth-child(1) { width: 37px; }
.tabstrip .tab:nth-child(2) { width: 33px; margin-left: -1px; }
.tabstrip .tab:nth-child(3) { width: 44px; margin-left: -1px; }

/* work */
.work { flex: 1; display: flex; min-height: 0; border-bottom: 2px solid #aaa; margin-top: -1px; }
.tools { width: 27px; flex: none; display: flex; flex-direction: column; padding: 0 0 0 2px; margin-top: -19px; position: relative; }
.tool { width: 23px; height: 22.900px; flex: none; display: flex; align-items: center; justify-content: center; position: relative; }
.tool .ic { width: 18px; }
.tool-on { background: #dff0fb; border: 1px solid #3ba6dc; }
.toolT b { font: bold 15px "Liberation Serif", serif; color: #174e8c; position: absolute; left: 5px; top: 2px; }
.toolA { font: bold 15px "Liberation Serif", serif; color: #d9605c; }
.toolS { font: bold 16px "Liberation Serif", serif; color: #333; }
.ole { border: 1px solid #7f9cc0; background: #fff; font: bold 9px "Liberation Mono", monospace; padding: 0 1px; color: #000; line-height: 9px; height: 11px; }

.dockL { width: 169px; flex: none; position: relative; padding: 5px 0 0 3px; }
.dockbar { display: flex; height: 10px; align-items: center; }
.dockbar2 { margin-top: 216px; }
.dots { width: 143px; height: 7px; background: radial-gradient(circle, #c9c9c9 1px, transparent 1.200px) 0 0 / 4px 3.500px; }
.redx { width: 10px; height: 10px; background: #c0594f; margin-left: 3px; display: flex; align-items: center; justify-content: center; }
.redx .wg { width: 9px; height: 9px; }
.splitter { position: absolute; right: 3px; top: 435px; width: 6px; height: 29px; background: #cdd0c0 radial-gradient(circle, #777 .8px, transparent 1px) 0 0 / 6px 4px; }

.center { width: 1558px; flex: none; display: flex; flex-direction: column; min-height: 0; }
.hruler { height: 14px; margin: 6px 0 5px 68px; width: 1491px; background: #fff; display: flex; flex: none; font-size: 9.500px; line-height: 14px; color: #111; }
.hruler span { width: 37.800px; flex: none; text-align: center; position: relative; }
.hruler span::before { content: ""; position: absolute; left: 0; top: 4px; height: 4px; width: 1px; background: #000; }
.hruler .hr0 { width: 20px; }
.hruler .hr0::before { left: 3px; top: 0; height: 14px; }

.stage { flex: 1; display: flex; min-height: 0; }
.vruler { width: 13px; margin: 50px 5px 0 0; background: #fff; flex: none; display: flex; flex-direction: column; overflow: hidden; }
.vruler span { height: 37.800px; flex: none; position: relative; display: flex; align-items: center; justify-content: center; }
.vruler span::before { content: ""; position: absolute; left: 4px; top: 0; width: 4px; height: 1px; background: #000; }
.vruler b { font: 9.500px "Noto Sans", sans-serif; writing-mode: vertical-rl; transform: rotate(180deg); color: #111; }
.vruler .vr0 { height: 19px; }
.vruler .vr0::before { left: 0; top: 4px; width: 13px; }

.canvas { width: 1523px; background: #808080; flex: none; padding: 10px 0 0 10px; overflow: hidden; }
.page { width: 793px; height: 900px; background: #fff; border: 1px solid #4d4d4d; border-width: 1px 2px 0 2px; padding: 37px 0 0 36px; }
.band { width: 720px; height: 900px; border: 1px dashed #999; border-bottom: none; display: flex; flex-direction: column; }
.bandhead { height: 18px; background: #efefef; padding-left: 5px; line-height: 15px; font-size: 11px; flex: none; color: #111; }
.bandhead b { font-weight: 700; }
.gridarea { flex: 1; position: relative;
  background-image:
    linear-gradient(90deg, #e6e6e6 1px, transparent 1px),
    linear-gradient(90deg, #f2f2f2 1px, transparent 1px),
    linear-gradient(#e6e6e6 1px, transparent 1px),
    linear-gradient(#f2f2f2 1px, transparent 1px);
  background-size: 37.800px 100%, 37.800px 100%, 100% 37.800px, 100% 37.800px;
  background-position: 37px 0, 18px 0, 0 20px, 0 1px;
}
.rtitle { position: absolute; left: 0; right: 0; top: 2px; text-align: center; font: bold 16px "Lato", sans-serif; color: #7f7f7f; }
.hl { position: absolute; left: 0; right: 0; height: 1px; background: #666; }
.hl-a { top: 30px; }
.hl-b { top: 72px; height: 2px; }
.vl { position: absolute; top: 30px; height: 43px; width: 1px; background: #222; }
.vl-l { left: -1px; } .vl-r { right: -1px; }
.tick { position: absolute; width: 4px; height: 1px; background: #111; }
.tick-a { left: 0; top: 0; } .tick-b { right: 0; top: 0; }
.orange { position: absolute; left: 0; top: 74px; width: 12px; height: 4px; background: #e2a231; }
.cds { position: absolute; left: 652px; top: 73px; width: 64px; height: 18px; background: #e4a52f; display: flex; align-items: center; gap: 5px; font-size: 10px; color: #222; padding-left: 5px; white-space: nowrap; }
.cy { width: 14px; height: 16px; flex: none; }
.sizer { position: absolute; left: 708px; top: 91px; width: 5px; height: 5px; border: 1.500px solid #222; background: #fff; }
.frag { position: absolute; right: 11px; font: 14px/18px "Liberation Sans", Arial, sans-serif; color: #111; white-space: nowrap; }
.fb { font-weight: 700; }
.f1 { top: 125px; } .f2 { top: 143px; } .f3 { top: 162px; } .f4 { top: 180px; } .f5 { top: 198px; right: 35px; }
.f6 { top: 246px; } .f7 { top: 263px; } .f8 { top: 280px; } .f9 { top: 298px; }
.rule { position: absolute; left: 640px; height: 1px; background: #000; }
.r1 { top: 240px; width: 60px; }
.r2 { top: 348px; width: 64px; }
.hsq { position: absolute; left: 708px; top: 530px; width: 5px; height: 5px; background: #000; }
.f10 { top: 591px; right: 58px; }
.f11 { top: 607px; right: 60px; letter-spacing: .4px; }
.para { position: absolute; font: 14px/18px "Liberation Sans", Arial, sans-serif; color: #111; white-space: nowrap; }
.p1 { left: 9px; top: 622px; letter-spacing: .24px; }
.p2 { left: 9px; top: 669px; letter-spacing: .24px; }
.p3 { left: 6px; top: 711px; letter-spacing: .36px; }
.p3 b { letter-spacing: .2px; }

/* scrollbars */
.sb { width: 17px; flex: none; display: flex; flex-direction: column; }
.sbb { height: 17px; flex: none; background: #fff; border: 1px solid #b8b8b8; display: flex; align-items: center; justify-content: center; }
.chv { width: 10px; height: 10px; display: block; }
.track { flex: 1; background: #fff; border-left: 1px solid #b8b8b8; border-right: 1px solid #b8b8b8; }
.thumb { flex: none; background: #dcdcdc; border: 1px solid #aaa; display: flex; align-items: center; justify-content: center; }
.g3 { width: 7px; height: 7px; background: repeating-linear-gradient(#777 0 1px, transparent 1px 3px); }
.th-main { height: 626px; }
.th-back { height: 47px; }
.th-tree { height: 128px; }
.sb-main { height: 869px; }

.dockR { flex: 1; position: relative; padding: 6px 0 0 9px; display: flex; }
.dockR .dots { width: 146px; }
.redx-cut { width: 2px; height: 10px; margin-left: 1px; }
.splitterR { right: auto; left: 0; top: 435px; }

/* status bar */
.statusbar { height: 15px; flex: none; display: flex; background: #fff; font-size: 10.800px; line-height: 14px; color: #111; }
.st { display: flex; align-items: center; white-space: nowrap; }
.st1 { width: 75px; padding-left: 1px; letter-spacing: -.5px; font-weight: 500; color: #000; }
.st2 { width: 112px; margin-left: 3px; background: #efefef; padding-left: 4px; }
.st3 { width: 114px; background: #efefef; padding-left: 3px; }
.st4 { padding-left: 5px; }
.si { width: 16px; height: 14px; flex: none; margin-right: 1px; }

/* dialogs */
.backdlg { position: absolute; left: 274px; top: 283px; width: 641px; height: 339px; background: #c3d5db; border: 1px solid #5a656b; display: flex; flex-direction: column; }
.bt { height: 21px; flex: none; position: relative; }
.bbtn { position: absolute; right: 5px; top: 0; width: 52px; height: 20px; border: 1px solid #5a656b; border-top: none; display: flex; align-items: center; padding-left: 21px; }
.bsep { position: absolute; top: 0; height: 3px; width: 1px; background: #5a656b; }
.bsep1 { left: 533px; } .bsep2 { left: 585px; }
.bpanel { margin: 8px 6px 0 0; height: 300px; background: #efefef; border-bottom: 1px solid #ddd; display: flex; flex-direction: column; align-items: flex-end; }
.bhead { width: 100%; flex: none; margin-top: 35px; height: 25px; border-top: 1px solid #bbb; border-bottom: 1px solid #bbb; background: #f6f6f6; display: flex; justify-content: flex-end; padding: 10px 4px 0 0; }
.upa { width: 10px; height: 12px; }
.sb-back { height: 238px; margin: 1px 2px 0 0; outline: 1px solid #fff; }

.dlg { position: absolute; left: 245px; top: 286px; width: 639px; height: 545px; background: #63c9ea; border: 1px solid #333; display: flex; flex-direction: column; }
.dtitle { height: 30px; flex: none; position: relative; display: flex; justify-content: center; align-items: center; }
.dcap { font-size: 14px; color: #222; padding-bottom: 2px; }
.fp-d { left: 9px; top: 6px; }
.dbtns { position: absolute; right: 5px; top: 0; display: flex; height: 21px; border: 1px solid #2d4550; border-top: none; }
.db { height: 20px; display: flex; align-items: center; justify-content: center; border-right: 1px solid #2d4550; }
.db-a { width: 28px; } .db-b { width: 26px; } .db-c { width: 45px; background: #c0594f; border-right: none; }
.dbody { margin: 0 6px 7px 7px; flex: 1; background: #efefef; display: flex; flex-direction: column; min-height: 0; }
.dtabs { height: 22px; flex: none; padding: 5px 0 0 7px; display: flex; border-bottom: 1px solid #aaa; background: repeating-conic-gradient(#f5f5f5 0 25%, #ececec 0 50%) 0 0 / 2px 2px; }
.dtabs .tab { margin-right: 1px; }
.dtabs .tab:nth-child(1) { width: 35px; }
.dtabs .tab:nth-child(2) { width: 52px; }
.dtabs .tab:nth-child(3) { width: 54px; }
.dtabs .tab:nth-child(4) { width: 47px; }
.treewrap { height: 369px; flex: none; background: #fff; display: flex; justify-content: space-between; padding: 0 2px 1px 1px; position: relative; }
.tree { list-style: none; margin: 0; padding: 0; }
.tree li { height: 16px; display: flex; align-items: center; padding-left: 43px; position: relative; white-space: nowrap; font-size: 10.700px; color: #223; }
.tree li::before { content: ""; position: absolute; left: 32px; top: 0; bottom: 0; border-left: 1px dotted #777; }
.tree li:last-child::before { bottom: 8px; }
.tree li::after { content: ""; position: absolute; left: 33px; top: 8px; width: 10px; border-top: 1px dotted #777; }
.ti { width: 13px; height: 13px; margin-right: 6px; flex: none; }
.sb-tree { height: 367px; margin-top: 1px; }
.exlabel { height: 23px; flex: none; border-top: 1px solid #aaa; border-bottom: 1px solid #aaa; padding-left: 3px; line-height: 19px; font-size: 10.500px; color: #223; }
.memo { height: 55px; flex: none; background: #fff; border: 1px solid #aaa; border-top: none; padding: 1px 0 0 3px; }
.caret { width: 1px; height: 15px; background: #000; }
.dfoot { flex: 1; padding: 10px 0 0 5px; display: flex; gap: 7px; align-items: flex-start; }
.btn { width: 73px; height: 23px; background: #dcdcdc; border: 1px solid #666; font: 10.700px "Noto Sans", sans-serif; color: #111; padding: 0; }
```
